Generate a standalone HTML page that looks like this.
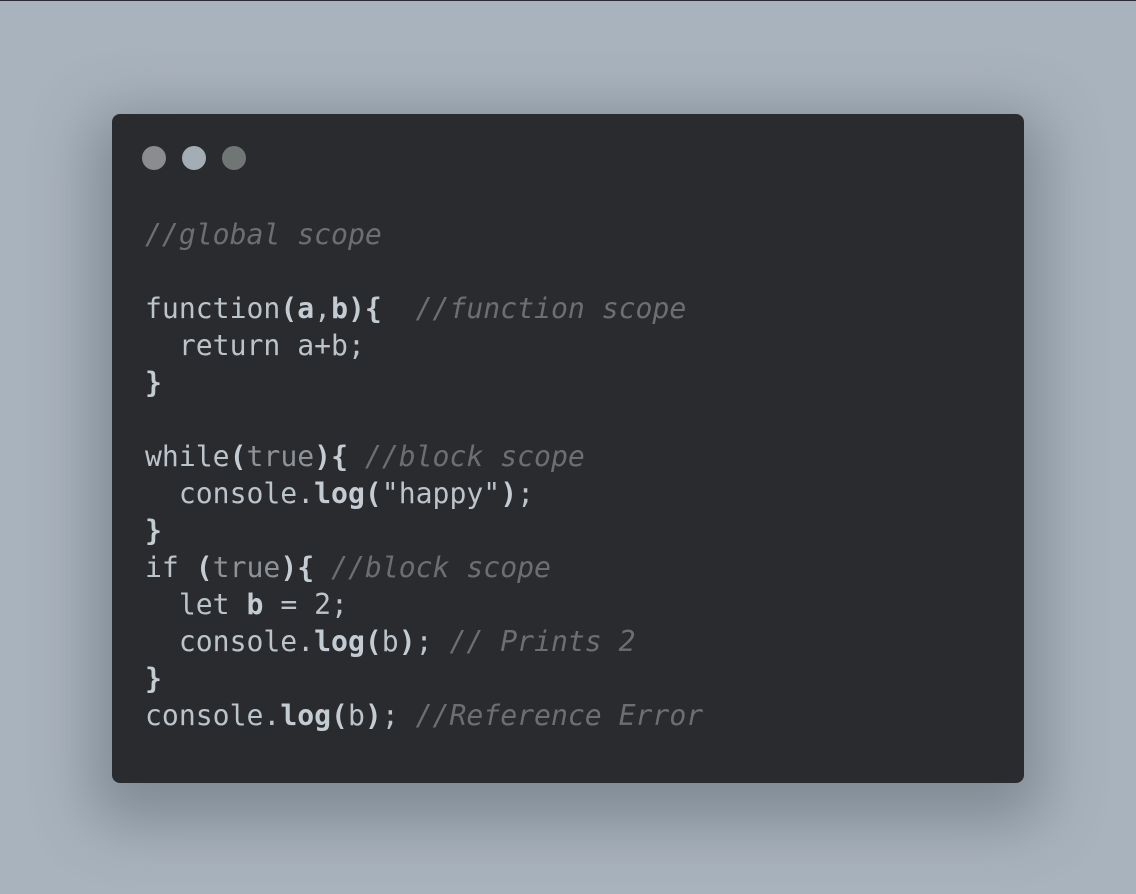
<!DOCTYPE html>
<html><head><meta charset="utf-8"><style>
html,body{margin:0;padding:0}
body{width:1136px;height:894px;background:#a9b3bd;position:relative;overflow:hidden;border-top:1px solid #2a2d33;box-sizing:border-box}
.win{position:absolute;left:112px;top:113px;width:912px;height:669px;background:#2a2b2e;border-radius:8px;box-shadow:0 20px 60px 20px rgba(80,90,100,0.45)}
.dot{position:absolute;top:32px;width:24px;height:24px;border-radius:50%}
pre{position:absolute;left:33px;top:102px;margin:0;font-family:"DejaVu Sans Mono","Liberation Mono",monospace;font-size:28.1px;line-height:37px;color:#bcc4cb}
.c{color:#6d6e72;font-style:italic}
.b{font-weight:bold;color:#c4ccd3}
.t{color:#8e9296}
</style></head><body>
<div class="win">
<div class="dot" style="left:30px;background:#8a8c90"></div>
<div class="dot" style="left:70px;background:#a3adb5"></div>
<div class="dot" style="left:110px;background:#707673"></div>
<pre><span class="c">//global scope</span>

function<span class="b">(a</span>,<span class="b">b){</span>  <span class="c">//function scope</span>
  return a+b;
<span class="b">}</span>

while<span class="b">(</span><span class="t">true</span><span class="b">){</span> <span class="c">//block scope</span>
  console.<span class="b">log(</span>"happy"<span class="b">)</span>;
<span class="b">}</span>
if <span class="b">(</span><span class="t">true</span><span class="b">){</span> <span class="c">//block scope</span>
  let <span class="b">b</span> = 2;
  console.<span class="b">log(</span>b<span class="b">)</span>; <span class="c">// Prints 2</span>
<span class="b">}</span>
console.<span class="b">log(</span>b<span class="b">)</span>; <span class="c">//Reference Error</span></pre>
</div>
</body></html>
